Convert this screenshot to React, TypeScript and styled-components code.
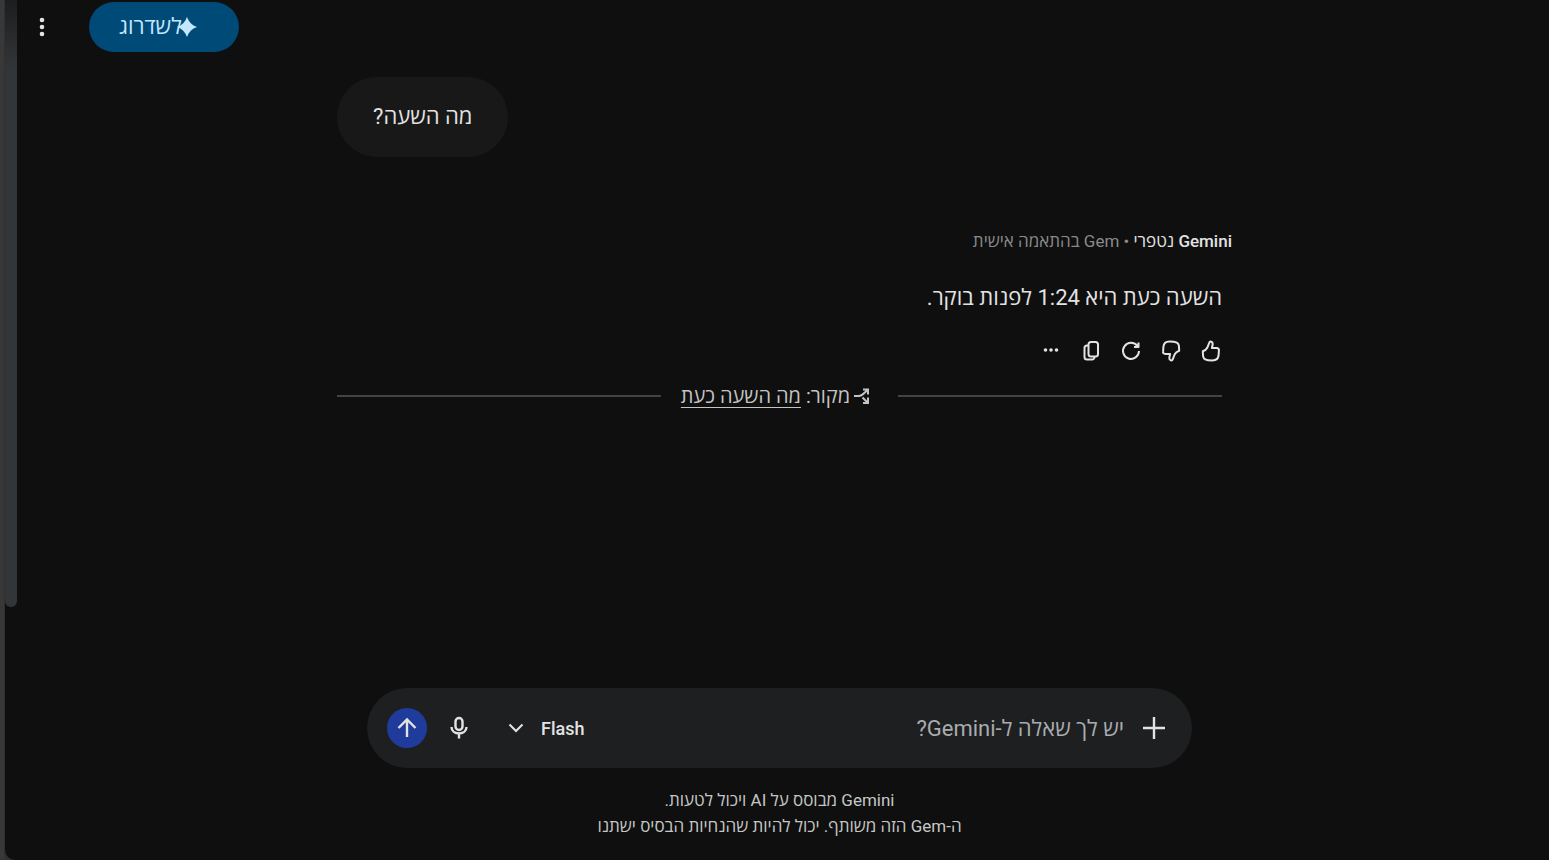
import React from "react";
import styled, { createGlobalStyle } from "styled-components";

const GlobalStyle = createGlobalStyle`
  *, *::before, *::after { box-sizing: border-box; }
  body { margin: 0; background: #0f0f0f; }
  button, input { font: inherit; color: inherit; }
  p { margin: 0; }
`;

const Frame = styled.div`
  display: flex;
  direction: rtl;
  min-height: 100vh;
  background: #303030;
  border-left: 4px solid #383838;
  color: #e3e3e3;
  font-family: Roboto, "Open Sans", "Noto Sans", sans-serif;
`;

const Panel = styled.div`
  position: relative;
  flex: 1;
  min-width: 0;
  display: flex;
  flex-direction: column;
  margin-left: 1px;
  padding-left: 5px;
  background: #0f0f0f;
  border-bottom-left-radius: 10px;
`;

const ScrollThumb = styled.div`
  position: absolute;
  top: 0;
  left: 0;
  width: 12px;
  height: calc(100vh - 253px);
  border-radius: 0 0 6px 6px;
  background: linear-gradient(#1c1d1e, #333638 70px);
`;

const Header = styled.header`
  display: flex;
  justify-content: flex-end;
  align-items: center;
  gap: 35px;
  height: 54px;
  padding-left: 19px;
`;

const BareButton = styled.button`
  display: inline-flex;
  align-items: center;
  justify-content: center;
  padding: 0;
  border: 0;
  background: none;
  cursor: pointer;
`;

const MenuButton = styled(BareButton)`
  width: 25px;
  height: 40px;
`;

const UpgradeButton = styled(BareButton)`
  position: relative;
  justify-content: flex-end;
  width: 150px;
  height: 50px;
  padding-left: 30px;
  border-radius: 25px;
  background: #004a77;
  color: #c2e7ff;
  font-size: 22px;
  line-height: 32px;

  svg {
    position: absolute;
    left: 88px;
    top: 15px;
  }
`;

const Conversation = styled.main`
  flex: 1;
  display: flex;
  flex-direction: column;
  width: 100%;
  max-width: 885px;
  margin: 0 auto;
  padding-top: 23px;
`;

const Bubble = styled.p`
  align-self: flex-end;
  padding: 22px 36px;
  border-radius: 40px;
  background: #181818;
  font-size: 22px;
  line-height: 36px;
`;

const Author = styled.div`
  margin: 72px -10px 0 0;
  color: #8a8a8a;
  font-size: 17px;
  line-height: 24px;

  strong {
    color: #e3e3e3;
    font-weight: 500;
  }
`;

const Answer = styled.p`
  margin-top: 27px;
  font-size: 22px;
  line-height: 36px;
`;

const Actions = styled.div`
  display: flex;
  margin: 15px -9px 0 0;
`;

const IconButton = styled(BareButton)`
  width: 40px;
  height: 40px;
`;

const Source = styled.div`
  display: flex;
  align-items: center;
  margin-top: 13px;
  color: #c4c4c4;
  font-size: 20px;
  line-height: 24px;

  &::before, &::after {
    content: "";
    flex: 1;
    height: 2px;
    background: #444;
  }
`;

const SourceLabel = styled.div`
  display: flex;
  align-items: center;
  gap: 4px;
  margin: 0 28px 0 20px;

  a {
    color: inherit;
    text-decoration: underline;
    text-decoration-thickness: 1px;
    text-underline-offset: 4px;
    text-decoration-skip-ink: none;
  }
`;

const Footer = styled.footer`
  display: flex;
  flex-direction: column;
  align-items: center;
  padding-bottom: 21px;
`;

const Composer = styled.form`
  display: flex;
  align-items: center;
  width: 100%;
  max-width: 825px;
  height: 80px;
  padding: 0 18px 0 20px;
  border-radius: 40px;
  background: #1e1f20;
`;

const Prompt = styled.input`
  flex: 1;
  min-width: 0;
  height: 40px;
  margin: 0 10px;
  padding: 0;
  border: 0;
  outline: 0;
  background: none;
  font-size: 22px;

  &::placeholder { color: #a9acb0; opacity: 1; }
`;

const ModelButton = styled(BareButton)`
  gap: 17px;
  height: 40px;
  margin-left: 29px;
  font-size: 18px;
  font-weight: 500;
`;

const SendButton = styled(IconButton)`
  margin-right: 12px;
  border-radius: 50%;
  background: #1f3b9b;
`;

const Notice = styled.p`
  margin-top: 19px;
  color: #c4c7c5;
  font-size: 17px;
  line-height: 26px;
  text-align: center;
`;

type IconProps = { size?: number; weight?: number; children: React.ReactNode };

const Icon = ({ size = 24, weight = 2, children }: IconProps) => (
  <svg width={size} height={size} viewBox={`0 0 ${size} ${size}`} fill="none" stroke="currentColor"
    strokeWidth={weight} strokeLinejoin="round" aria-hidden="true">
    {children}
  </svg>
);

const thumbPath =
  "M3.800 12.200C6 11.500 7.400 10.500 8.400 8.500L10.200 3.800C10.800 1.900 13.800 2.300 13.700 4.900C13.600 6.600 12.900 7.800 12.900 9H17.600C19.400 9 20.300 10.200 19.900 11.600L19.600 16.200C19.300 19.500 17.200 21.500 13.500 21.500C10 21.500 8 21.300 6.200 20.300C4.800 19.600 4.300 18.800 4.100 17.200Z";

export default function App() {
  return (
    <>
      <GlobalStyle />
      <Frame dir="rtl" lang="he">
        <Panel>
          <ScrollThumb />
          <Header>
            <UpgradeButton type="button">
              לשדרוג
              <svg width="20" height="20" viewBox="0 0 20 20" fill="currentColor" aria-hidden="true">
                <path d="M10 0C11.800 5 15 8.200 20 10C15 11.800 11.800 15 10 20C8.200 15 5 11.800 0 10C5 8.200 8.200 5 10 0Z" />
              </svg>
            </UpgradeButton>
            <MenuButton type="button" aria-label="אפשרויות נוספות">
              <svg width="6" height="20" viewBox="0 0 6 20" fill="currentColor" aria-hidden="true">
                <circle cx="3" cy="3" r="2.300" />
                <circle cx="3" cy="10" r="2.300" />
                <circle cx="3" cy="17" r="2.300" />
              </svg>
            </MenuButton>
          </Header>

          <Conversation>
            <Bubble>מה השעה?</Bubble>
            <Author><strong>Gemini נטפרי</strong> • Gem בהתאמה אישית</Author>
            <Answer>השעה כעת היא 1:24 לפנות בוקר.</Answer>
            <Actions>
              <IconButton type="button" aria-label="תשובה טובה">
                <Icon><path d={thumbPath} /></Icon>
              </IconButton>
              <IconButton type="button" aria-label="תשובה לא טובה">
                <Icon><path d={thumbPath} transform="rotate(180 12 12)" /></Icon>
              </IconButton>
              <IconButton type="button" aria-label="ניסיון נוסף">
                <Icon>
                  <path d="M18.500 7.200A8 8 0 1 0 20 12M19.500 3.500V8H15" />
                </Icon>
              </IconButton>
              <IconButton type="button" aria-label="העתקה">
                <Icon>
                  <rect x="9.500" y="3" width="9.500" height="14.500" rx="2.500" />
                  <path d="M9 6.500H8A2.500 2.500 0 0 0 5.500 9V18A2.500 2.500 0 0 0 8 20.500H13A2.500 2.500 0 0 0 15.500 18" />
                </Icon>
              </IconButton>
              <IconButton type="button" aria-label="עוד">
                <svg width="16" height="6" viewBox="0 0 16 6" fill="currentColor" aria-hidden="true">
                  <circle cx="2.500" cy="2" r="1.800" />
                  <circle cx="8" cy="2" r="1.800" />
                  <circle cx="13.500" cy="2" r="1.800" />
                </svg>
              </IconButton>
            </Actions>
            <Source>
              <SourceLabel>
                <Icon size={16}>
                  <path d="M0 8H5C8 8 9 6 13.500 2M9 1.500H14V6.500M8.500 9.500L13.500 14.500M14 9.500V15H9" strokeLinejoin="miter" />
                </Icon>
                <span>מקור: <a href="#source">מה השעה כעת</a></span>
              </SourceLabel>
            </Source>
          </Conversation>

          <Footer>
            <Composer onSubmit={(e) => e.preventDefault()}>
              <IconButton type="button" aria-label="הוספה">
                <Icon weight={2.4}><path d="M12 1V23M1 12H23" /></Icon>
              </IconButton>
              <Prompt aria-label="יש לך שאלה ל-Gemini?" placeholder="יש לך שאלה ל-Gemini?" />
              <ModelButton type="button" aria-haspopup="menu">
                Flash
                <Icon size={16}><path d="M1.500 4.500L8 11L14.500 4.500" strokeLinejoin="miter" /></Icon>
              </ModelButton>
              <IconButton type="button" aria-label="מיקרופון">
                <Icon weight={2.4}>
                  <rect x="8.500" y="2" width="7" height="12" rx="3.500" />
                  <path d="M4.500 11C4.500 19.500 19.500 19.500 19.500 11M12 17.500V22.500" />
                </Icon>
              </IconButton>
              <SendButton type="submit" aria-label="שליחה">
                <Icon weight={2.4}><path d="M12 21V4M3.500 12L12 3.500L20.500 12" strokeLinejoin="miter" /></Icon>
              </SendButton>
            </Composer>
            <Notice>
              Gemini מבוסס על AI ויכול לטעות.
              <br />
              ה-Gem הזה משותף. יכול להיות שהנחיות הבסיס ישתנו
            </Notice>
          </Footer>
        </Panel>
      </Frame>
    </>
  );
}
